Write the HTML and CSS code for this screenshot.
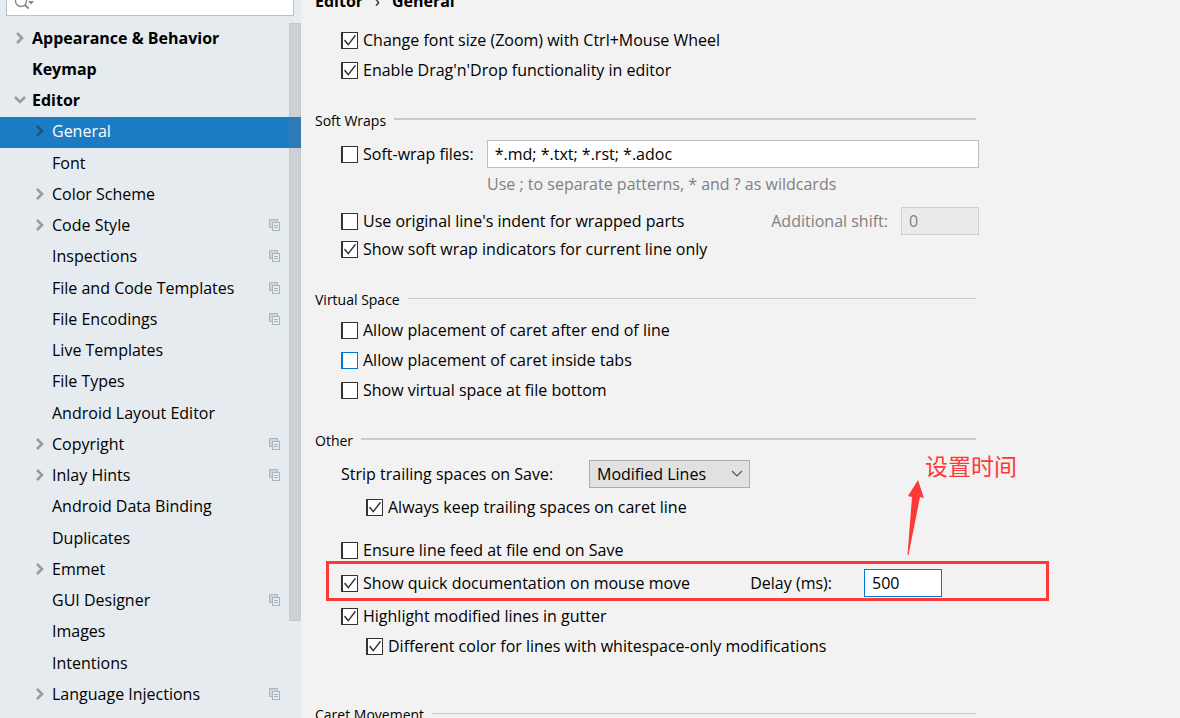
FILE: index.html
```html
<!DOCTYPE html>
<html lang="en">
  <head>
    <meta charset="UTF-8" />
    <meta name="viewport" content="width=device-width, initial-scale=1.0" />
    <title>Settings</title>
    <link rel="stylesheet" href="styles.css">
  </head>
  <body>
    <svg class="sprite" aria-hidden="true">
      <symbol id="chevron" viewBox="0 0 8 12">
        <path d="M1 1 L6 6 L1 11" fill="none" stroke="currentColor" stroke-width="2.6" />
      </symbol>
      <symbol id="copy" viewBox="0 0 11 12">
        <path d="M3.5 8.5 H0.5 V0.5 H8.5 V3" fill="none" stroke="#a9b5bd" />
        <rect x="1" y="1" width="7" height="7" fill="#ccd6dc" />
        <rect x="3.5" y="3.5" width="7" height="8" fill="#e6ebf0" stroke="#a9b5bd" />
        <path d="M5 6.5 H9 M5 8.5 H9" stroke="#a9b5bd" />
      </symbol>
    </svg>

    <div class="settings">
      <aside class="sidebar">
        <div class="search">
          <svg class="search-icon" width="20" height="14" viewBox="0 0 20 14" aria-hidden="true">
            <circle cx="7" cy="5" r="5.5" fill="none" stroke="#7f8b91" stroke-width="1.4" />
            <path d="M11 9 L14.5 12.5" stroke="#7f8b91" stroke-width="2" />
            <path d="M14 5 H20 L17 8.5 Z" fill="#7f8b91" />
          </svg>
          <input type="text" class="search-input" aria-label="Search settings" />
        </div>

        <div class="tree-wrap">
          <ul class="tree">
            <li><a href="#" class="node top"><svg class="arrow"><use href="#chevron" /></svg>Appearance &amp; Behavior</a></li>
            <li><a href="#" class="node top">Keymap</a></li>
            <li>
              <a href="#" class="node top"><svg class="arrow open"><use href="#chevron" /></svg>Editor</a>
              <ul class="subtree">
                <li><a href="#" class="node selected"><svg class="arrow"><use href="#chevron" /></svg>General</a></li>
                <li><a href="#" class="node">Font</a></li>
                <li><a href="#" class="node"><svg class="arrow"><use href="#chevron" /></svg>Color Scheme</a></li>
                <li><a href="#" class="node"><svg class="arrow"><use href="#chevron" /></svg>Code Style<svg class="copy"><use href="#copy" /></svg></a></li>
                <li><a href="#" class="node">Inspections<svg class="copy"><use href="#copy" /></svg></a></li>
                <li><a href="#" class="node">File and Code Templates<svg class="copy"><use href="#copy" /></svg></a></li>
                <li><a href="#" class="node">File Encodings<svg class="copy"><use href="#copy" /></svg></a></li>
                <li><a href="#" class="node">Live Templates</a></li>
                <li><a href="#" class="node">File Types</a></li>
                <li><a href="#" class="node">Android Layout Editor</a></li>
                <li><a href="#" class="node"><svg class="arrow"><use href="#chevron" /></svg>Copyright<svg class="copy"><use href="#copy" /></svg></a></li>
                <li><a href="#" class="node"><svg class="arrow"><use href="#chevron" /></svg>Inlay Hints<svg class="copy"><use href="#copy" /></svg></a></li>
                <li><a href="#" class="node">Android Data Binding</a></li>
                <li><a href="#" class="node">Duplicates</a></li>
                <li><a href="#" class="node"><svg class="arrow"><use href="#chevron" /></svg>Emmet</a></li>
                <li><a href="#" class="node">GUI Designer<svg class="copy"><use href="#copy" /></svg></a></li>
                <li><a href="#" class="node">Images</a></li>
                <li><a href="#" class="node">Intentions</a></li>
                <li><a href="#" class="node"><svg class="arrow"><use href="#chevron" /></svg>Language Injections<svg class="copy"><use href="#copy" /></svg></a></li>
              </ul>
            </li>
          </ul>
          <div class="scroll-thumb"></div>
        </div>
      </aside>

      <main class="content">
        <div class="breadcrumb">
          <span>Editor</span>
          <span class="sep">›</span>
          <span>General</span>
        </div>

        <div class="row">
          <label class="check"><input type="checkbox" checked />Change font size (Zoom) with Ctrl+Mouse Wheel</label>
        </div>
        <div class="row">
          <label class="check"><input type="checkbox" checked />Enable Drag'n'Drop functionality in editor</label>
        </div>

        <section class="group">
          <h2 class="group-title thick">Soft Wraps</h2>
          <div class="row space-s">
            <label class="check"><input type="checkbox" />Soft-wrap files:</label>
            <input type="text" class="field patterns" aria-label="Soft-wrap file patterns" value="*.md; *.txt; *.rst; *.adoc" />
          </div>
          <p class="row hint">Use ; to separate patterns, * and ? as wildcards</p>
          <div class="row space-m">
            <label class="check"><input type="checkbox" />Use original line's indent for wrapped parts</label>
            <label class="shift-label" for="shift">Additional shift:</label>
            <input type="text" class="field short" id="shift" value="0" disabled />
          </div>
          <div class="row tight">
            <label class="check"><input type="checkbox" checked />Show soft wrap indicators for current line only</label>
          </div>
        </section>

        <section class="group">
          <h2 class="group-title">Virtual Space</h2>
          <div class="row">
            <label class="check"><input type="checkbox" />Allow placement of caret after end of line</label>
          </div>
          <div class="row">
            <label class="check"><input type="checkbox" class="hovered" />Allow placement of caret inside tabs</label>
          </div>
          <div class="row">
            <label class="check"><input type="checkbox" />Show virtual space at file bottom</label>
          </div>
        </section>

        <section class="group">
          <h2 class="group-title thick">Other</h2>
          <div class="row space-s">
            <label class="strip-label" for="strip">Strip trailing spaces on Save:</label>
            <div class="select">
              <select id="strip">
                <option>Modified Lines</option>
                <option>All</option>
                <option>None</option>
              </select>
              <svg class="select-arrow" width="12" height="8" viewBox="0 0 12 8" aria-hidden="true">
                <path d="M1 1 L6 6 L11 1" fill="none" stroke="#555" stroke-width="1.2" />
              </svg>
            </div>
          </div>
          <div class="row indent space-s">
            <label class="check"><input type="checkbox" checked />Always keep trailing spaces on caret line</label>
          </div>
          <div class="row space-l">
            <label class="check"><input type="checkbox" />Ensure line feed at file end on Save</label>
          </div>
          <div class="row marked space-s">
            <label class="check"><input type="checkbox" checked />Show quick documentation on mouse move</label>
            <label class="delay-label" for="delay">Delay (ms):</label>
            <input type="text" class="field short focused" id="delay" value="500" />
            <svg class="note-arrow" width="18" height="76" viewBox="0 0 18 76" aria-hidden="true">
              <path d="M11 0 L17 18 L13 17 L1.5 75 L0.5 75 L5 17 L1 16 Z" fill="#ff3838" />
            </svg>
            <span class="note" lang="zh">设置时间</span>
          </div>
          <div class="row space-s">
            <label class="check"><input type="checkbox" checked />Highlight modified lines in gutter</label>
          </div>
          <div class="row indent">
            <label class="check"><input type="checkbox" checked />Different color for lines with whitespace-only modifications</label>
          </div>
        </section>

        <section class="group last">
          <h2 class="group-title">Caret Movement</h2>
        </section>
      </main>
    </div>
  </body>
</html>
```
FILE: styles.css
```css
*,
*::before,
*::after {
  box-sizing: border-box;
}

body {
  margin: 0;
  height: 100vh;
  overflow: hidden;
  background-color: #f2f2f2;
  color: #000;
  font-family: "Open Sans", "Noto Sans CJK SC", sans-serif;
  font-size: 16px;
}

input,
select {
  font: inherit;
  color: inherit;
}

ul {
  list-style: none;
  margin: 0;
  padding: 0;
}

.sprite {
  position: absolute;
  width: 0;
  height: 0;
}

.settings {
  display: flex;
  min-height: 100vh;
}

/* sidebar */
.sidebar {
  flex: 0 0 301px;
  background-color: #e6ebf0;
}

.search {
  position: relative;
  margin: -12px 7px 7px 6px;
}

.search-input {
  display: block;
  width: 100%;
  height: 28px;
  border: 1px solid #bdbfc1;
  background-color: #fff;
  padding: 0 8px 0 30px;
}

.search-icon {
  position: absolute;
  left: 8px;
  bottom: 6px;
}

.tree-wrap {
  position: relative;
  padding-top: 1px;
}

.node {
  display: flex;
  align-items: center;
  height: 31px;
  padding: 0 21px 3px 52px;
  color: #000;
  text-decoration: none;
  white-space: nowrap;
}

.node.top {
  padding-left: 32px;
  font-weight: bold;
}

.node.selected {
  background-color: #1b7cc4;
  color: #fff;
}

.subtree li:nth-child(4n + 1) {
  margin-bottom: 1px;
}

.arrow {
  width: 8px;
  height: 12px;
  margin: 0 8px 0 -16px;
  color: #999c9f;
}

.arrow.open {
  transform: rotate(90deg);
}

.selected .arrow {
  color: #15568a;
}

.copy {
  width: 11px;
  height: 12px;
  margin-left: auto;
}

.scroll-thumb {
  position: absolute;
  top: 0;
  right: 0;
  width: 12px;
  height: 598px;
  background-color: rgba(120, 120, 125, 0.22);
  border: 1px solid rgba(120, 120, 125, 0.08);
}

/* settings page */
.content {
  flex: 1;
  max-width: 678px;
  padding-left: 14px;
}

.breadcrumb {
  display: flex;
  gap: 12px;
  height: 28px;
  margin-top: -13px;
  margin-bottom: 11px;
  line-height: 28px;
  font-weight: bold;
}

.sep {
  font-weight: normal;
}

.row {
  display: flex;
  align-items: center;
  height: 28px;
  margin: 2px 0 0;
  padding-left: 26px;
  white-space: nowrap;
}

.row.indent {
  padding-left: 51px;
}

.row.tight {
  margin-top: 0;
}

.row.space-s {
  margin-top: 5px;
}

.row.space-m {
  margin-top: 9px;
}

.row.space-l {
  margin-top: 15px;
}

.group {
  margin-top: 22px;
}

.group.last {
  margin-top: 40px;
}

.group-title {
  display: flex;
  align-items: center;
  gap: 8px;
  height: 29px;
  margin: 0 3px 0 0;
  font-size: 14px;
  font-weight: normal;
}

.group-title::after {
  content: "";
  flex: 1;
  height: 1px;
  margin-bottom: 3px;
  background-color: #cacaca;
}

.group-title.thick::after {
  height: 2px;
}

.check {
  display: flex;
  align-items: center;
  gap: 5px;
}

.check input {
  appearance: none;
  position: relative;
  width: 17px;
  height: 17px;
  margin: 0;
  border: 1px solid #333;
  border-left-width: 2px;
  background-color: #fff;
}

.check input.hovered {
  border-color: #0078d7;
}

.check input:checked::before {
  content: "";
  position: absolute;
  inset: 1px;
  background-color: #333;
  clip-path: polygon(0 55%, 9% 47%, 36% 76%, 91% 10%, 100% 18%, 36% 94%);
}

.field {
  height: 28px;
  border: 1px solid #bebebe;
  background-color: #fff;
  padding: 0 7px;
}

.field.patterns {
  flex: 1;
  margin-left: 13px;
}

.field.short {
  width: 78px;
}

.field:disabled {
  background-color: #ebebeb;
  border-color: #cfcfcf;
  color: #808080;
}

.field.focused {
  border-color: #0078d7;
  outline: none;
}

.hint {
  padding-left: 172px;
  color: #808080;
}

.shift-label {
  margin-left: auto;
  margin-right: 13px;
  color: #808080;
}

.strip-label {
  width: 248px;
}

.select {
  position: relative;
}

.select select {
  appearance: none;
  width: 161px;
  height: 28px;
  border: 1px solid #adadad;
  border-radius: 0;
  background-color: #e1e1e1;
  padding: 0 7px;
}

.select-arrow {
  position: absolute;
  top: 10px;
  right: 7px;
  pointer-events: none;
}

/* highlighted option with its note */
.marked {
  position: relative;
}

.marked::before {
  content: "";
  position: absolute;
  top: -8px;
  left: 11px;
  width: 723px;
  height: 40px;
  border: 3px solid #ff3838;
  pointer-events: none;
}

.delay-label {
  margin-left: auto;
  margin-right: 32px;
}

.marked .field {
  margin-right: 37px;
}

.note-arrow {
  position: absolute;
  left: 592px;
  bottom: 41px;
}

.note {
  position: absolute;
  left: 610px;
  bottom: 115px;
  color: #ff3838;
  font-family: "Noto Sans CJK SC", sans-serif;
  font-size: 23px;
  line-height: 34px;
}
```
